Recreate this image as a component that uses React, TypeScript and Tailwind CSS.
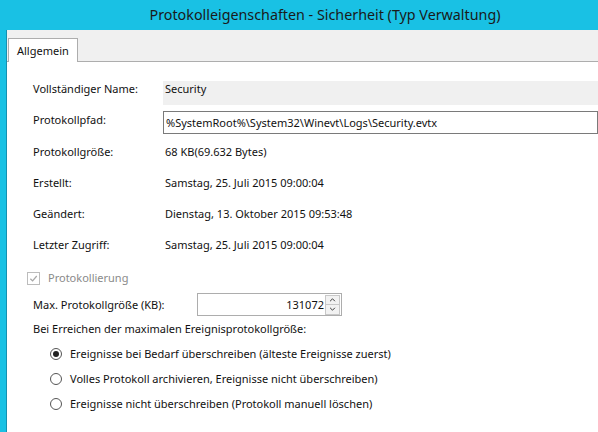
import React from 'react'

const font = { fontFamily: '"Segoe UI", "Noto Sans", "Open Sans", sans-serif' }

const InfoRow = ({ label, value, h }: { label: string; value: string; h: string }) => (
  <div className={`flex items-center ${h}`}>
    <span className="w-[132px] shrink-0">{label}</span>
    <span>{value}</span>
  </div>
)

const Radio = ({ checked, label }: { checked?: boolean; label: string }) => (
  <label className="flex h-[25px] items-center">
    <span className="mr-[8px] flex h-[12px] w-[12px] items-center justify-center rounded-full border border-[#555] bg-white">
      {checked && <span className="h-[6px] w-[6px] rounded-full bg-[#222]" />}
    </span>
    {label}
  </label>
)

const App: React.FC = () => {
  return (
    <div
      className="flex h-[432px] w-[598px] flex-col overflow-hidden bg-[#19c1e4] text-[11px] leading-[16px] text-[#111]"
      style={font}
    >
      <div className="flex h-[30px] shrink-0 items-center justify-center pl-[52px] text-[14.3px] text-[#1a1a1a]">
        Protokolleigenschaften - Sicherheit (Typ Verwaltung)
      </div>
      <div className="flex min-h-0 flex-1">
        <div className="w-[7px] shrink-0 border-r border-[#1590b0]" />
        <div className="flex flex-1 flex-col bg-[#f0f0f0]">
          <div className="flex h-[32px] shrink-0 items-end border-b border-[#adadad]">
            <div className="ml-[1px] mb-[-1px] flex h-[24px] w-[70px] items-center border border-b-0 border-[#adadad] bg-white pl-[8px] pt-[1px]">
              Allgemein
            </div>
          </div>
          <div className="flex-1 bg-white pl-[26px]">
            <div className="mt-[19px] flex h-[24px] items-start">
              <span className="w-[130px] shrink-0">Vollständiger Name:</span>
              <span className="h-[24px] flex-1 bg-[#f0f0f0] pl-[2px]">Security</span>
            </div>
            <div className="mt-[6px] flex h-[23px] items-center">
              <span className="mt-[-5px] w-[130px] shrink-0">Protokollpfad:</span>
              <span className="flex h-[23px] flex-1 items-center border border-[#7a7a7a] pl-[2px]">
                %SystemRoot%\System32\Winevt\Logs\Security.evtx
              </span>
            </div>
            <div className="pt-[2px]">
              <InfoRow h="h-[31px]" label="Protokollgröße:" value="68 KB(69.632 Bytes)" />
              <InfoRow h="h-[31px]" label="Erstellt:" value="Samstag, 25. Juli 2015 09:00:04" />
              <InfoRow h="h-[31px]" label="Geändert:" value="Dienstag, 13. Oktober 2015 09:53:48" />
              <InfoRow h="h-[31px]" label="Letzter Zugriff:" value="Samstag, 25. Juli 2015 09:00:04" />
            </div>
            <label className="ml-[-6px] mt-[10px] flex h-[16px] items-center text-[#8a8a8a]">
              <span className="mr-[8px] flex h-[13px] w-[13px] items-center justify-center border border-[#bcbcbc] bg-white">
                <svg viewBox="0 0 10 10" className="h-[9px] w-[9px]">
                  <path d="M1.5 5.2 L4 7.6 L8.6 2.2" fill="none" stroke="#a8a8a8" strokeWidth="1.4" />
                </svg>
              </span>
              Protokollierung
            </label>
            <div className="mt-[7px] flex h-[23px] items-center">
              <span className="w-[164px] shrink-0">Max. Protokollgröße (KB):</span>
              <div className="flex h-[23px] w-[145px] items-center border border-[#adadad] bg-white">
                <span className="flex-1 text-right">131072</span>
                <div className="ml-[1px] mr-[1px] flex flex-col">
                  <span className="flex h-[10px] w-[15px] items-center justify-center border border-[#c8c8c8] bg-[#f2f2f2]">
                    <svg viewBox="0 0 8 5" className="h-[4px] w-[7px]">
                      <path d="M1 4 L4 1 L7 4" fill="none" stroke="#333" strokeWidth="1.2" />
                    </svg>
                  </span>
                  <span className="flex h-[10px] w-[15px] items-center justify-center border border-t-0 border-[#c8c8c8] bg-[#f2f2f2]">
                    <svg viewBox="0 0 8 5" className="h-[4px] w-[7px]">
                      <path d="M1 1 L4 4 L7 1" fill="none" stroke="#333" strokeWidth="1.2" />
                    </svg>
                  </span>
                </div>
              </div>
            </div>
            <div className="mt-[5px] flex h-[16px] items-center">
              Bei Erreichen der maximalen Ereignisprotokollgröße:
            </div>
            <div className="mt-[4px] pl-[17px]">
              <Radio checked label="Ereignisse bei Bedarf überschreiben (älteste Ereignisse zuerst)" />
              <Radio label="Volles Protokoll archivieren, Ereignisse nicht überschreiben)" />
              <Radio label="Ereignisse nicht überschreiben (Protokoll manuell löschen)" />
            </div>
          </div>
        </div>
      </div>
    </div>
  )
}

export default App
